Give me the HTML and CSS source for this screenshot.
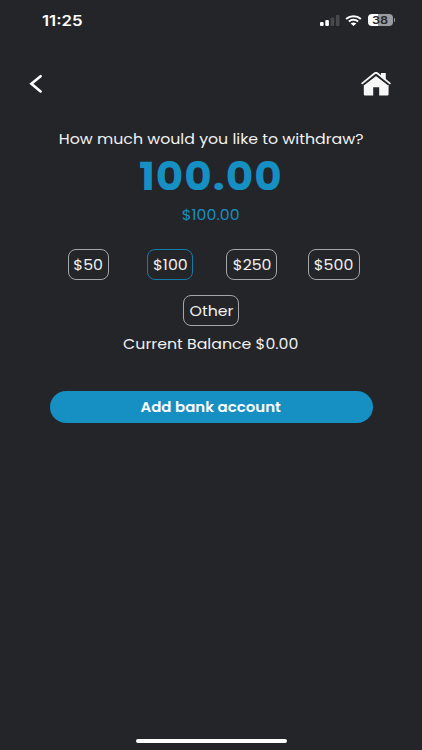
FILE: index.html
```html
<!DOCTYPE html>
<html lang="en">
<head>
<meta charset="utf-8">
<meta name="viewport" content="width=device-width, initial-scale=1">
<title>Withdraw</title>
<link rel="stylesheet" href="styles.css">
</head>
<body>
<div class="screen">
  <div class="status">
    <span class="text time">11:25</span>
    <div class="indicators">
      <svg class="signal" viewBox="0 0 20 11"><rect x="0" y="7" width="3.6" height="4" rx="1" fill="#fff"/><rect x="5.3" y="5" width="3.6" height="6" rx="1" fill="#fff"/><rect x="10.6" y="2.5" width="3.6" height="8.5" rx="1" fill="#48494d"/><rect x="15.9" y="0" width="3.6" height="11" rx="1" fill="#48494d"/></svg>
      <svg class="wifi" viewBox="0 0 17 11" preserveAspectRatio="none"><path d="M1.1 3.9C5.2.3 11.8.3 15.9 3.9M3.9 6.5c2.6-2.2 6.6-2.2 9.2 0" fill="none" stroke="#fff" stroke-width="2"/><path d="M5.7 8.4c1.6-1.3 4-1.3 5.6 0L8.5 10.9z" fill="#fff"/></svg>
      <div class="battery"><span class="text charge">38</span></div>
      <i class="cap"></i>
    </div>
  </div>
  <div class="nav">
    <svg class="back" viewBox="0 0 14 20"><path d="M11.6 2.2 2.4 9.8l9.2 7.6" fill="none" stroke="#fff" stroke-width="2.6" stroke-linecap="round"/></svg>
    <svg class="home" viewBox="0 0 30 24"><path d="M20 1h4.8v9L20 6z" fill="#f7f7f8"/><path d="M15 3.4 27.6 13V22c0 1-.6 1.6-1.6 1.6h-7.8v-8.4h-6v8.4H4.4c-1 0-1.6-.6-1.6-1.6v-9z" fill="#f7f7f8"/><path d="M2.4 12.4 15 2.6 27.6 12.4" fill="none" stroke="#242528" stroke-width="2.2"/><path d="M1.2 11.4 13.7 1.3c.9-.7 1.7-.7 2.6 0l12.5 10.1" fill="none" stroke="#f7f7f8" stroke-width="1.8" stroke-linecap="round"/></svg>
  </div>
  <main>
    <p class="question"><span class="text">How much would you like to withdraw?</span></p>
    <p class="amount"><span class="text">100.00</span></p>
    <p class="subamount"><span class="text">$100.00</span></p>
    <div class="options">
      <button class="option fifty"><span class="text">$50</span></button>
      <button class="option hundred selected"><span class="text">$100</span></button>
      <button class="option twofifty"><span class="text">$250</span></button>
      <button class="option fivehundred"><span class="text">$500</span></button>
    </div>
    <button class="option other"><span class="text">Other</span></button>
    <p class="balance"><span class="text">Current Balance $0.00</span></p>
    <button class="add"><span class="text">Add bank account</span></button>
  </main>
  <div class="home-bar"></div>
</div>
</body>
</html>
```
FILE: styles.css
```css
* { box-sizing: border-box; }
body { margin: 0; background: #242528; color: #f1f1f2; font-family: Poppins, Inter, sans-serif; font-size: 14px; }
p { margin: 0; display: flex; justify-content: center; align-items: center; }
button { appearance: none; padding: 0; margin: 0; color: inherit; font: inherit; display: flex; justify-content: center; align-items: center; }
svg { display: block; }
.text { display: block; white-space: nowrap; flex: none; transform: scaleX(1.127); }
.screen { width: 422px; height: 750px; display: flex; flex-direction: column; overflow: hidden; }
.status { height: 40px; padding: 0 27px 0 42px; display: flex; justify-content: space-between; align-items: center; }
.time { color: #fff; font-family: Inter, sans-serif; font-size: 14px; font-weight: 600; transform-origin: left; transform: scaleX(1.2); }
.indicators { display: flex; align-items: center; }
.signal { width: 20px; height: 11px; }
.wifi { width: 17px; height: 11px; margin-left: 5px; }
.battery { width: 25px; height: 12px; margin-left: 6px; border-radius: 4px; background: linear-gradient(90deg, #fff 40%, #9b9c9f 40%); display: flex; align-items: center; justify-content: center; color: #242528; }
.charge { font-family: Inter, sans-serif; font-size: 11px; font-weight: 600; transform: scaleX(1.15); }
.cap { width: 1px; height: 4px; margin-left: 1px; background: #9b9c9f; border-radius: 0 1px 1px 0; }
.nav { height: 84px; padding: 32px 31px 0 29px; display: flex; justify-content: space-between; align-items: flex-start; }
.back { width: 14px; height: 20px; margin-top: 2px; }
.home { width: 30px; height: 24px; }
main { display: flex; flex-direction: column; align-items: center; }
.question { height: 30px; }
.amount { height: 44px; padding-top: 1px; color: #168fc3; font-size: 38px; font-weight: 700; letter-spacing: 0.9px; }
.amount .text { transform: scaleX(1.11); }
.subamount { height: 34px; padding-top: 1px; color: #168fc3; }
.options { width: 327px; height: 31px; margin: 17px 0 0 0; display: grid; grid-template-columns: repeat(4, 1fr); justify-items: center; }
.option { height: 31px; padding-top: 1px; border: 1px solid #a5a6a8; border-radius: 8px; background: transparent; }
.fifty { width: 41px; }
.hundred { width: 46px; }
.twofifty { width: 51px; }
.fivehundred { width: 52px; }
.selected { border-color: #147ca8; }
.other { width: 56px; margin-top: 15px; }
.balance { height: 36px; }
.add { width: 323px; height: 32px; margin-top: 29px; border: 0; border-radius: 16px; background: #168fc3; color: #fff; font-weight: 600; }
.add .text { transform: scaleX(1.07); }
.home-bar { width: 151px; height: 4px; margin: auto auto 7px; border-radius: 2px; background: #fff; }
```
